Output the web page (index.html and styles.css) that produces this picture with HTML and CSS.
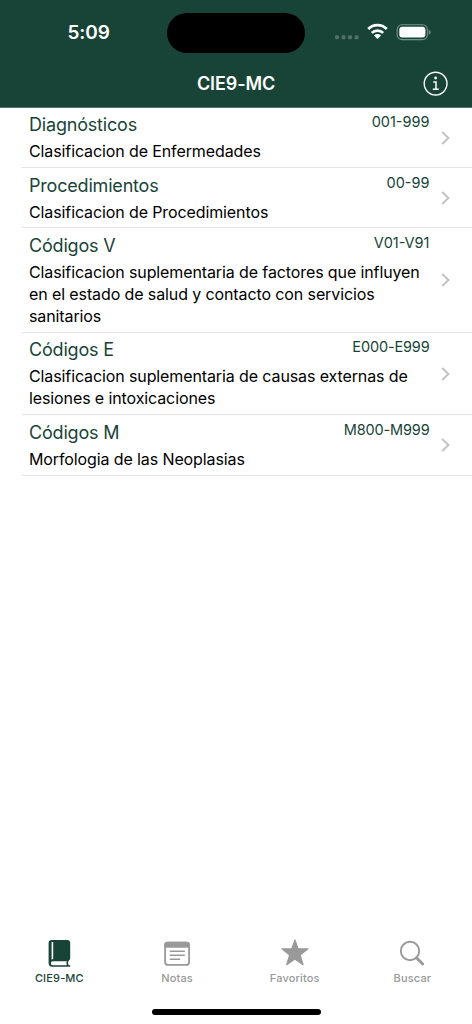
FILE: index.html
```html
<!DOCTYPE html>
<html lang="es">
<head>
<meta charset="utf-8">
<meta name="viewport" content="width=device-width">
<title>CIE9-MC</title>
<link rel="stylesheet" href="styles.css">
</head>
<body>
<div class="screen">
  <header class="header">
    <div class="status">
      <div class="clock">5:09</div>
      <div class="island"></div>
      <svg class="indicators" width="98" height="20" viewBox="0 0 98 20">
        <g fill="#4f7067"><rect x="0" y="13.3" width="4" height="4" rx="1.3"/><rect x="6.5" y="13.3" width="4" height="4" rx="1.3"/><rect x="13" y="13.3" width="4" height="4" rx="1.3"/><rect x="19.6" y="13.3" width="4" height="4" rx="1.3"/></g>
        <g fill="none" stroke="#fff" stroke-width="2.7"><path d="M33.2 7a13.1 13.1 0 0 1 18.6 0"/><path d="M36.8 10.9a8.1 8.1 0 0 1 11.4 0"/></g>
        <path d="M42.5 17.1 39 13.4a5 5 0 0 1 7 0z" fill="#fff"/>
        <rect x="62.2" y="2.7" width="30.2" height="14.9" rx="4.7" fill="none" stroke="#75918a" stroke-width="1.1"/>
        <rect x="64.3" y="4.7" width="26.1" height="10.9" rx="3" fill="#fff"/>
        <path d="M93.9 7.7c2.2.8 2.2 4.2 0 5z" fill="#75918a"/>
      </svg>
    </div>
    <div class="navbar">
      <h1 class="nav-title">CIE9-MC</h1>
      <svg class="info" width="26" height="26" viewBox="0 0 26 26" fill="none" stroke="#fff">
        <circle cx="12.6" cy="12.6" r="11.4" stroke-width="1.4"/>
        <path d="M10.3 11h2.7v7.2M9.8 18.3h6" stroke-width="1.5"/>
        <circle cx="12.6" cy="7" r="1.4" fill="#fff" stroke="none"/>
      </svg>
    </div>
  </header>
  <main class="list">
    <section class="row">
      <div class="heading"><h2 class="title">Diagnósticos</h2><span class="code">001-999</span></div>
      <p class="desc">Clasificacion de Enfermedades</p>
      <svg class="chevron" width="9" height="14" viewBox="0 0 9 14"><path d="m1.1.9 6.3 6.1-6.3 6.1"/></svg>
    </section>
    <section class="row">
      <div class="heading"><h2 class="title">Procedimientos</h2><span class="code">00-99</span></div>
      <p class="desc">Clasificacion de Procedimientos</p>
      <svg class="chevron" width="9" height="14" viewBox="0 0 9 14"><path d="m1.1.9 6.3 6.1-6.3 6.1"/></svg>
    </section>
    <section class="row">
      <div class="heading"><h2 class="title">Códigos V</h2><span class="code">V01-V91</span></div>
      <p class="desc">Clasificacion suplementaria de factores que influyen<br>en el estado de salud y contacto con servicios<br>sanitarios</p>
      <svg class="chevron" width="9" height="14" viewBox="0 0 9 14"><path d="m1.1.9 6.3 6.1-6.3 6.1"/></svg>
    </section>
    <section class="row">
      <div class="heading"><h2 class="title">Códigos E</h2><span class="code wide">E000-E999</span></div>
      <p class="desc">Clasificacion suplementaria de causas externas de<br>lesiones e intoxicaciones</p>
      <svg class="chevron" width="9" height="14" viewBox="0 0 9 14"><path d="m1.1.9 6.3 6.1-6.3 6.1"/></svg>
    </section>
    <section class="row">
      <div class="heading"><h2 class="title">Códigos M</h2><span class="code wide">M800-M999</span></div>
      <p class="desc">Morfologia de las Neoplasias</p>
      <svg class="chevron" width="9" height="14" viewBox="0 0 9 14"><path d="m1.1.9 6.3 6.1-6.3 6.1"/></svg>
    </section>
  </main>
  <nav class="tabs">
    <div class="tab active">
      <svg width="30" height="30" viewBox="0 0 30 30">
        <path fill="#184438" fill-rule="evenodd" d="M7.8.9h15.4q3 0 3 3v15.3q0 1.7-1.6 2.5-1.3 2.5 0 4.5h1.6v1.6H8.3q-3.7 0-3.7-3.7V4.1q0-3.2 3.2-3.2zM7.6 3v17.6q.7-.4 1.6-.5V3zM8.8 22.2q-2 .1-2 2t2 2h14q-1-2 0-4z"/>
      </svg>
      <span>CIE9-MC</span>
    </div>
    <div class="tab">
      <svg width="30" height="30" viewBox="0 0 30 30">
        <rect x="3.1" y="3.7" width="24" height="22.2" rx="3" fill="none" stroke="#999" stroke-width="1.8"/>
        <path d="M2.2 8.8V6q0-3.2 3.2-3.2h19.4q3.2 0 3.2 3.2v2.8z" fill="#999"/>
        <path d="M8.3 12.3h14M8.3 16.3h14M8.3 20.2h9.3" stroke="#999" stroke-width="1.4" stroke-linecap="round"/>
      </svg>
      <span>Notas</span>
    </div>
    <div class="tab">
      <svg width="30" height="30" viewBox="0 0 30 30">
        <path d="m14.9.9 3.2 9h9.8l-7.8 6.1 3 9.7-8.2-5.8-8.2 5.8 3-9.7-7.8-6.1h9.8z" fill="#999" stroke="#999" stroke-width="1.2" stroke-linejoin="round"/>
      </svg>
      <span>Favoritos</span>
    </div>
    <div class="tab">
      <svg width="30" height="30" viewBox="0 0 30 30" fill="none" stroke="#999">
        <circle cx="13" cy="12" r="9.2" stroke-width="1.9"/>
        <path d="m19.5 18.7 6.2 6.2" stroke-width="2.8" stroke-linecap="round"/>
      </svg>
      <span>Buscar</span>
    </div>
  </nav>
  <div class="home"></div>
</div>
</body>
</html>
```
FILE: styles.css
```css
* { box-sizing: border-box; }
body { margin: 0; background: #fff; font-family: Inter, "Liberation Sans", sans-serif; }
h1, h2, p { margin: 0; font-weight: 400; }
svg { display: block; overflow: visible; }
.screen { width: 472px; height: 1024px; display: flex; flex-direction: column; overflow: hidden; }
.header { height: 107.6px; flex: none; background: #184438; color: #fff; border-bottom: 1px solid #54746b; }
.status { height: 60px; display: grid; grid-template-columns: 167px 138px 167px; align-items: start; }
.clock { padding: 21px 0 0 67.5px; font-size: 19px; font-weight: 600; line-height: 24px; letter-spacing: -0.1px; }
.island { height: 40.5px; margin-top: 12.5px; border-radius: 21px; background: #000; }
.indicators { margin: 22px 0 0 30px; }
.navbar { height: 48px; display: grid; grid-template-columns: 48px 1fr 48px; align-items: center; }
.nav-title { grid-column: 2; text-align: center; font-size: 18px; font-weight: 600; line-height: 24px; letter-spacing: -0.1px; }
.info { margin-left: -1px; }
.list { flex: 1; }
.row { margin-left: 22px; padding: 5.6px 42.5px 4.8px 7px; border-bottom: 1px solid #e4e4e5; display: grid; grid-template-columns: 1fr 0; }
.heading { grid-column: 1; grid-row: 1; height: 27px; display: flex; justify-content: space-between; align-items: flex-start; color: #184438; }
.title { font-size: 18px; line-height: 24px; letter-spacing: -0.19px; }
.code { font-size: 14.5px; line-height: 18px; }
.wide { letter-spacing: -0.15px; }
.desc { grid-column: 1; grid-row: 2; font-size: 16px; line-height: 22px; letter-spacing: -0.11px; color: #000; white-space: nowrap; }
.chevron { grid-column: 2; grid-row: 1 / 3; align-self: center; margin-left: 11.2px; }
.chevron path { fill: none; stroke: #c2c2c4; stroke-width: 2; }
.tabs { height: 86px; flex: none; display: grid; grid-template-columns: repeat(4, 117.7px); }
.tab { display: flex; flex-direction: column; align-items: center; padding: 16px 0 0 1px; color: #999; font-size: 11px; font-weight: 500; line-height: 16px; letter-spacing: 0.15px; }
.tab svg { margin-bottom: 1px; }
.active { color: #184438; }
.home { width: 169px; height: 6px; flex: none; margin: 0 auto 9px 151.5px; border-radius: 3px; background: #000; }
```
